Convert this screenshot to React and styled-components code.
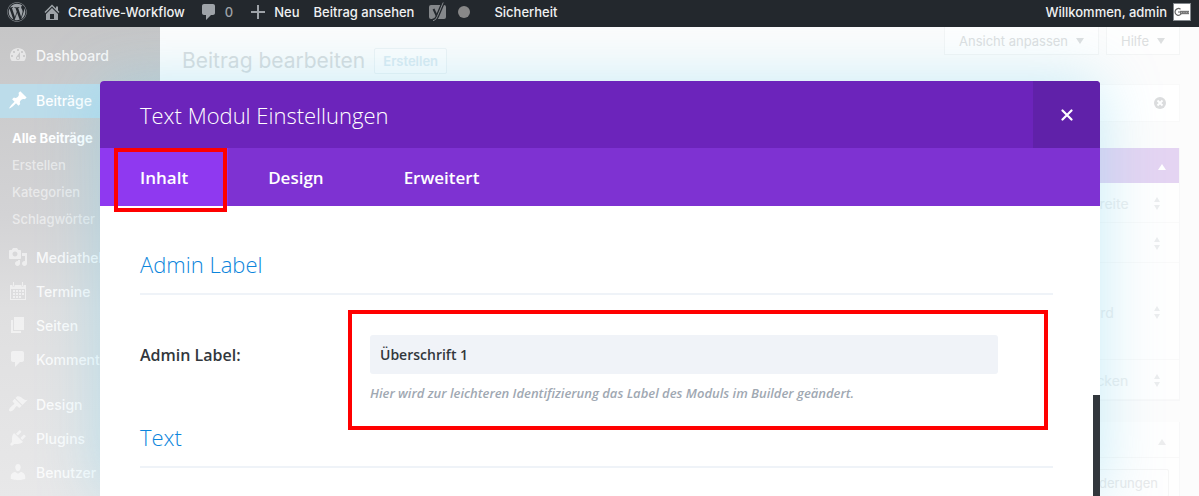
import React from "react";
import styled, { createGlobalStyle } from "styled-components";
import { FaWordpress } from "react-icons/fa";

const ui = `Inter, "Liberation Sans", sans-serif`;
const modalFont = `"Open Sans", "Noto Sans", sans-serif`;

const Global = createGlobalStyle`
  *, *::before, *::after { box-sizing: border-box; }
  body { margin: 0; background: #fcfcfc; font-family: ${ui}; }
  a { color: inherit; text-decoration: none; }
  h1, h2, h3, p, ul { margin: 0; padding: 0; }
  ul { list-style: none; }
  button, input, select { font: inherit; color: inherit; border: 0; background: none; padding: 0; margin: 0; }
`;

const Page = styled.div`
  position: relative;
  height: 100vh;
  display: flex;
  flex-direction: column;
  overflow: hidden;
`;

/* Admin bar */
const AdminBar = styled.header`
  position: relative;
  z-index: 3;
  flex: none;
  height: 27px;
  padding: 0 8px 4px 7px;
  display: flex;
  align-items: center;
  background: #23282d;
  color: #f0f1f2;
  font-size: 13px;
  font-weight: 500;
  line-height: 20px;
  white-space: nowrap;
`;

const BarLink = styled.a`
  display: flex;
  align-items: center;
  gap: ${(p) => p.$gap || 6}px;
  margin-right: ${(p) => p.$after || 14}px;
  color: ${(p) => (p.$muted ? "#9ea3a8" : "#f0f1f2")};
  svg { color: #9ea3a8; }
`;

const StatusDot = styled.span`
  width: 12px;
  height: 12px;
  border-radius: 50%;
  background: #888;
`;

const Account = styled(BarLink)`
  margin: 0 0 0 auto;
`;

/* Dashboard behind the dialog */
const Shell = styled.div`
  flex: 1;
  min-height: 0;
  display: flex;
`;

const SideMenu = styled.nav`
  flex: none;
  width: 160px;
  padding-top: 12px;
  background: linear-gradient(#c6c6c7, #d3d3d5 40%, #dfdfe0 60%, #e8e8e9);
  font-size: 14px;
  font-weight: 500;
`;

const MenuLink = styled.a`
  display: flex;
  align-items: center;
  gap: 8px;
  height: 34px;
  padding: 0 0 2px 8px;
  margin-top: ${(p) => (p.$spaced ? 11 : 0)}px;
  background: ${(p) => (p.$current ? "#bcdcea" : "transparent")};
  color: ${(p) => (p.$current ? "#fff" : "rgba(255, 255, 255, 0.85)")};
  svg { opacity: ${(p) => (p.$current ? 1 : 0.65)}; }
`;

const SubMenu = styled.ul`
  padding: 7px 0 8px 12px;
  font-size: 13px;
  line-height: 27px;
`;

const SubLink = styled.a`
  color: ${(p) => (p.$current ? "#fff" : "rgba(255, 255, 255, 0.55)")};
  font-weight: ${(p) => (p.$current ? 700 : 500)};
`;

const Main = styled.main`
  flex: 1;
  min-width: 0;
  padding: 0 19px 0 22px;
  color: #e0e2e3;
  font-size: 13px;
`;

const PageHead = styled.div`
  display: flex;
  align-items: flex-start;
  height: 57px;
`;

const PageTitle = styled.h1`
  margin-top: 20px;
  color: #d9dcde;
  font-size: 21px;
  font-weight: 400;
  line-height: 28px;
`;

const NewLink = styled.a`
  margin: 21px 0 0 9px;
  padding: 0 8px;
  border: 1px solid #eef3f5;
  border-radius: 2px;
  background: rgba(255, 255, 255, 0.3);
  color: #dcebf2;
  font-weight: 600;
  line-height: 24px;
`;

const MetaTabs = styled.div`
  display: flex;
  gap: 7px;
  margin-left: auto;
`;

const MetaTab = styled.button`
  display: flex;
  align-items: center;
  gap: 8px;
  height: 28px;
  padding: 0 14px;
  border: solid #f4f5f5;
  border-width: 0 1px 1px;
  background: #fefefe;
  color: #dddfe0;
`;

const Notice = styled.div`
  display: flex;
  align-items: center;
  justify-content: flex-end;
  height: 38px;
  padding-right: 13px;
  border: 1px solid #f9f9f9;
  background: #fff;
`;

const IconButton = styled.button`
  display: flex;
  color: #dcddde;
`;

const SideColumn = styled.div`
  width: 280px;
  margin: 26px 0 0 auto;
`;

const PostBox = styled.section`
  margin-bottom: 21px;
  border: solid #f7f7f8;
  border-width: 0 1px 1px;
  background: #fefefe;
`;

const BoxHead = styled.div`
  display: flex;
  align-items: center;
  justify-content: flex-end;
  height: ${(p) => (p.$accent ? 35 : 36)}px;
  padding: 4px 13px 0 0;
  border-bottom: 1px solid ${(p) => (p.$accent ? "#e4d4f2" : "#f8f8f8")};
  background: ${(p) => (p.$accent ? "#e4d4f2" : "#fefefe")};
  color: ${(p) => (p.$accent ? "#fff" : "#ededee")};
`;

const SelectRow = styled.div`
  position: relative;
  display: flex;
  align-items: center;
  justify-content: flex-end;
  height: ${(p) => p.$height}px;
  padding: 2px 14px 0 0;
  border-bottom: 1px solid #f9f9f9;
  color: #ebedee;
  svg { position: absolute; right: 18px; }
`;

const Select = styled.select`
  appearance: none;
  width: 111px;
  font-size: 14px;
`;

const BoxBody = styled.div`
  display: flex;
  justify-content: flex-end;
  padding: 11px 10px;
`;

const PreviewButton = styled.button`
  height: 28px;
  padding: 0 10px;
  border: 1px solid #f5f5f5;
  border-radius: 2px;
  color: #e8e9ea;
`;

/* Settings dialog */
const Dialog = styled.section`
  position: absolute;
  z-index: 2;
  top: 81px;
  right: 99px;
  bottom: 0;
  left: 100px;
  border-radius: 4px 4px 0 0;
  background: #fff;
  box-shadow: 0 0 60px rgba(115, 210, 240, 0.4);
  font-family: ${modalFont};
`;

const DialogHead = styled.header`
  display: flex;
  justify-content: space-between;
  align-items: center;
  height: 67px;
  padding-left: 40px;
  border-radius: 4px 4px 0 0;
  background: #6c24bb;
  color: #fff;
  overflow: hidden;
`;

const DialogTitle = styled.h2`
  font-size: 22px;
  font-weight: 300;
  line-height: 30px;
`;

const CloseButton = styled.button`
  display: flex;
  align-items: center;
  justify-content: center;
  width: 67px;
  height: 67px;
  background: #6021a9;
`;

const Tabs = styled.div`
  display: flex;
  height: 58px;
  background: #7e32d2;
`;

const Tab = styled.button`
  position: relative;
  padding: 0 40px;
  background: ${(p) => (p.$active ? "#8f39f0" : "transparent")};
  color: #fff;
  font-size: 17px;
  font-weight: 600;
`;

const TabMarker = styled.span`
  position: absolute;
  inset: 0 1px -6px 14px;
  border: 4px solid #f00;
`;

const DialogBody = styled.div`
  padding: 43px 47px 0 40px;
`;

const SectionTitle = styled.h3`
  padding-bottom: 14px;
  border-bottom: 2px solid #eff3f8;
  color: #0c85dc;
  font-size: 22px;
  font-weight: 300;
  line-height: 30px;
`;

const Option = styled.div`
  display: grid;
  grid-template-columns: 208px 1fr;
  align-items: start;
  margin: 15px 5px -8px 0;
`;

const OptionLabel = styled.label`
  padding-top: 35px;
  color: #32373c;
  font-size: 16px;
  font-weight: 600;
  line-height: 20px;
`;

const Field = styled.div`
  height: 120px;
  padding: 21px 46px 0 18px;
  border: 4px solid #f00;
`;

const TextInput = styled.input`
  display: block;
  width: 100%;
  height: 39px;
  padding: 0 10px;
  border-radius: 3px;
  background: #f0f3f8;
  color: #32373c;
  font-size: 14px;
  font-weight: 600;
`;

const Hint = styled.p`
  margin-top: 10px;
  color: #a0a8b2;
  font-size: 13px;
  font-style: italic;
  font-weight: 600;
  line-height: 18px;
`;

const ScrollThumb = styled.div`
  position: absolute;
  top: 314px;
  right: 0;
  bottom: 0;
  width: 7px;
  background: #32373c;
`;

const paths = {
  home: "M16 8.5l1.53 1.53-1.06 1.06L10 4.6l-6.47 6.49-1.06-1.06L10 2.5l4 4v-2h2v4zm-6-2.46l6 5.99V18H4v-5.97zM12 17v-5H8v5h4z",
  plus: "M17 9v2h-6v6H9v-6H3V9h6V3h2v6h6z",
  comment: "M5 2h9c1.1 0 2 .9 2 2v7c0 1.1-.9 2-2 2h-2l-5 5v-5H5c-1.1 0-2-.9-2-2V4c0-1.1.9-2 2-2z",
  dashboard: "M3.76 16h12.48c1.1-1.37 1.76-3.11 1.76-5 0-4.42-3.58-8-8-8s-8 3.58-8 8c0 1.89.66 3.63 1.76 5zM10 4c.55 0 1 .45 1 1s-.45 1-1 1-1-.45-1-1 .45-1 1-1zM6 6c.55 0 1 .45 1 1s-.45 1-1 1-1-.45-1-1 .45-1 1-1zm8 0c.55 0 1 .45 1 1s-.45 1-1 1-1-.45-1-1 .45-1 1-1zm-5.37 5.55L12 7v6c0 1.1-.9 2-2 2s-2-.9-2-2c0-.57.24-1.08.63-1.45zM4 10c.55 0 1 .45 1 1s-.45 1-1 1-1-.45-1-1 .45-1 1-1zm12 0c.55 0 1 .45 1 1s-.45 1-1 1-1-.45-1-1 .45-1 1-1zm-5 3c0-.55-.45-1-1-1s-1 .45-1 1 .45 1 1 1 1-.45 1-1z",
  pin: "M10.44 3.02l1.82-1.82 6.36 6.35-1.83 1.82c-1.05-.68-2.48-.57-3.41.36l-.75.75c-.92.93-1.04 2.35-.35 3.41l-1.83 1.82-2.41-2.41-2.8 2.79c-.42.42-3.38 2.71-3.8 2.29s1.86-3.39 2.28-3.81l2.79-2.79L4.1 9.36l1.83-1.82c1.05.69 2.48.57 3.4-.36l.75-.75c.93-.92 1.05-2.35.36-3.41z",
  media: "M13 11V4c0-.55-.45-1-1-1h-1.67L9 1H5L3.67 3H2c-.55 0-1 .45-1 1v7c0 .55.45 1 1 1h10c.55 0 1-.45 1-1zM7 4.5c1.38 0 2.5 1.12 2.5 2.5S8.38 9.5 7 9.5 4.5 8.38 4.5 7 5.62 4.5 7 4.5zM14 6h5v10.5c0 1.38-1.12 2.5-2.5 2.5S14 17.88 14 16.5s1.12-2.5 2.5-2.5c.17 0 .34.02.5.05V9h-3V6zm-4 8.05V13h2v3.5c0 1.38-1.12 2.5-2.5 2.5S7 17.88 7 16.5 8.12 14 9.5 14c.17 0 .34.02.5.05z",
  calendar: "M2 4h2.5v1.5h2V4h7v1.5h2V4H18v15H2zM3 8v10h14V8zM5 1h1v4H5zM14 1h1v4h-1zM5 9h2v2H5zM8 9h2v2H8zM11 9h2v2h-2zM14 9h2v2h-2zM5 12h2v2H5zM8 12h2v2H8zM11 12h2v2h-2zM14 12h2v2h-2zM5 15h2v2H5zM8 15h2v2H8zM11 15h2v2h-2z",
  pages: "M6 15V2h10v13H6zm-1 1h8v2H3V5h2v11z",
  brush: "M14.48 11.06L7.41 3.99l1.5-1.5c.5-.56 2.3-.47 3.51.32 1.21.8 1.43 1.28 2.91 2.1 1.18.64 2.45 1.26 4.45.85zm-.71.71L6.7 4.7 4.93 6.47c-.39.39-.39 1.02 0 1.41l1.06 1.06c.39.39.39 1.03 0 1.42-.6.6-1.43 1.11-2.21 1.69-.35.26-.7.53-1.01.84C1.43 14.23.4 16.08 1.4 17.07c.99 1 2.84-.03 4.18-1.36.31-.31.58-.66.85-1.02.57-.78 1.08-1.61 1.69-2.21.39-.39 1.02-.39 1.41 0l1.06 1.06c.39.39 1.02.39 1.41 0z",
  plug: "M13.11 4.36L9.87 7.6 8 5.73l3.24-3.24c.35-.34 1.05-.2 1.56.32.52.51.66 1.21.31 1.55zm-8 1.77l.91-1.12 9.01 9.01-1.19.84c-.71.71-2.63 1.16-3.82 1.16H6.14L4.9 17.26c-.59.59-1.54.59-2.12 0-.59-.58-.59-1.53 0-2.12l1.24-1.24v-3.88c0-1.13.4-3.19 1.09-3.89zm7.26 3.97l3.24-3.24c.34-.35 1.04-.21 1.55.31.52.51.66 1.21.31 1.55l-3.24 3.25z",
  user: "M10 9.25c-2.27 0-2.73-3.44-2.73-3.44C7 4.02 7.82 2 9.97 2c2.16 0 2.98 2.02 2.71 3.81 0 0-.41 3.44-2.68 3.44zm0 2.57L12.72 10c2.39 0 4.52 2.33 4.52 4.53v2.49s-3.65 1.13-7.24 1.13c-3.65 0-7.24-1.13-7.24-1.13v-2.49c0-2.25 1.94-4.48 4.47-4.48z",
};

const Icon = ({ name }) => (
  <svg width="20" height="20" viewBox="0 0 20 20" fill="currentColor" fillRule={name === "calendar" ? "evenodd" : "nonzero"} aria-hidden="true">
    <path d={paths[name]} />
  </svg>
);

const Triangle = ({ up }) => (
  <svg width="8" height="6" viewBox="0 0 8 6" fill="currentColor" aria-hidden="true">
    <path d={up ? "M0 6L4 0L8 6z" : "M0 0L4 6L8 0z"} />
  </svg>
);

const Chevrons = () => (
  <svg width="8" height="13" viewBox="0 0 8 13" fill="currentColor" aria-hidden="true">
    <path d="M1 5L4 0L7 5zM1 8L4 13L7 8z" />
  </svg>
);

const Yoast = () => (
  <svg width="20" height="20" viewBox="0 0 20 20" aria-hidden="true">
    <rect x="1" y="3" width="17" height="14" rx="2" fill="#85888b" />
    <path d="M5.5 7L8.6 13.5" fill="none" stroke="#23282d" strokeWidth="2" />
    <path d="M15 1L9.3 14.5Q8 18 4.5 18.5" fill="none" stroke="#23282d" strokeWidth="3.4" />
    <path d="M15.2 0.5L9.3 14.5Q8 18.3 5 18.8" fill="none" stroke="#85888b" strokeWidth="1" />
  </svg>
);

const Avatar = () => (
  <svg width="18" height="18" viewBox="0 0 18 18" aria-hidden="true">
    <rect x=".5" y=".5" width="17" height="17" fill="#fff" stroke="#82878c" />
    <path d="M7.5 6.2C5.5 4.5 2 6 2 9c0 3.2 4 4.4 5.8 2.2V9H5" fill="none" stroke="#666" strokeWidth="1.2" />
    <path d="M7 9.5h9" fill="none" stroke="#777" strokeWidth="3.4" />
    <path d="M8 9.5h8" fill="none" stroke="#aaa" strokeWidth="1.2" strokeDasharray="1 1.4" />
  </svg>
);

const lowerMenu = [
  ["media", "Mediathek"],
  ["calendar", "Termine"],
  ["pages", "Seiten"],
  ["comment", "Kommentare"],
  ["brush", "Design", true],
  ["plug", "Plugins"],
  ["user", "Benutzer"],
];

const layoutOptions = [
  ["Seitenlayout", "Volle Breite", 40],
  ["Punktnavigation", "Aus", 40],
  ["Navigation", "Standard", 97],
  ["Beitragstitel", "Verstecken", 40],
];

export default function App() {
  return (
    <Page>
      <Global />
      <AdminBar>
        <BarLink href="#wordpress" aria-label="WordPress" $after={15}><FaWordpress size={20} /></BarLink>
        <BarLink href="#site"><Icon name="home" />Creative-Workflow</BarLink>
        <BarLink href="#comments" $muted $after={15}><Icon name="comment" />0</BarLink>
        <BarLink href="#new"><Icon name="plus" />Neu</BarLink>
        <BarLink href="#view">Beitrag ansehen</BarLink>
        <BarLink href="#seo" aria-label="SEO" $gap={10} $after={24}><Yoast /><StatusDot /></BarLink>
        <BarLink href="#security">Sicherheit</BarLink>
        <Account href="#account">Willkommen, admin<Avatar /></Account>
      </AdminBar>

      <Shell>
        <SideMenu>
          <MenuLink href="#dashboard"><Icon name="dashboard" />Dashboard</MenuLink>
          <MenuLink href="#posts" $current $spaced><Icon name="pin" />Beiträge</MenuLink>
          <SubMenu>
            {["Alle Beiträge", "Erstellen", "Kategorien", "Schlagwörter"].map((t, i) => (
              <li key={t}><SubLink href={"#sub" + i} $current={i === 0}>{t}</SubLink></li>
            ))}
          </SubMenu>
          {lowerMenu.map(([icon, label, spaced]) => (
            <MenuLink key={label} href={"#" + icon} $spaced={spaced}><Icon name={icon} />{label}</MenuLink>
          ))}
        </SideMenu>

        <Main>
          <PageHead>
            <PageTitle>Beitrag bearbeiten</PageTitle>
            <NewLink href="#create">Erstellen</NewLink>
            <MetaTabs>
              <MetaTab>Ansicht anpassen<Triangle /></MetaTab>
              <MetaTab>Hilfe<Triangle /></MetaTab>
            </MetaTabs>
          </PageHead>
          <Notice>
            <IconButton aria-label="Verwerfen">
              <svg width="12" height="12" viewBox="0 0 12 12" aria-hidden="true">
                <circle cx="6" cy="6" r="6" fill="currentColor" />
                <path d="M3.5 3.5l5 5M8.5 3.5l-5 5" stroke="#fff" strokeWidth="1.8" />
              </svg>
            </IconButton>
          </Notice>
          <SideColumn>
            <PostBox>
              <BoxHead $accent><Triangle up /></BoxHead>
              {layoutOptions.map(([label, value, height]) => (
                <SelectRow key={label} $height={height}>
                  <Select aria-label={label}><option>{value}</option></Select>
                  <Chevrons />
                </SelectRow>
              ))}
            </PostBox>
            <PostBox>
              <BoxHead><Triangle up /></BoxHead>
              <BoxBody><PreviewButton>Vorschau der Änderungen</PreviewButton></BoxBody>
            </PostBox>
          </SideColumn>
        </Main>
      </Shell>

      <Dialog role="dialog" aria-labelledby="dialog-title">
        <DialogHead>
          <DialogTitle id="dialog-title">Text Modul Einstellungen</DialogTitle>
          <CloseButton aria-label="Schließen">
            <svg width="12" height="12" viewBox="0 0 12 12" aria-hidden="true">
              <path d="M1.5 1.5l9 9M10.5 1.5l-9 9" stroke="#fff" strokeWidth="2.2" strokeLinecap="round" />
            </svg>
          </CloseButton>
        </DialogHead>
        <Tabs role="tablist">
          <Tab role="tab" aria-selected="true" $active>Inhalt<TabMarker /></Tab>
          <Tab role="tab">Design</Tab>
          <Tab role="tab">Erweitert</Tab>
        </Tabs>
        <DialogBody>
          <SectionTitle>Admin Label</SectionTitle>
          <Option>
            <OptionLabel htmlFor="admin-label">Admin Label:</OptionLabel>
            <Field>
              <TextInput id="admin-label" type="text" defaultValue="Überschrift 1" />
              <Hint>Hier wird zur leichteren Identifizierung das Label des Moduls im Builder geändert.</Hint>
            </Field>
          </Option>
          <SectionTitle>Text</SectionTitle>
        </DialogBody>
        <ScrollThumb />
      </Dialog>
    </Page>
  );
}
